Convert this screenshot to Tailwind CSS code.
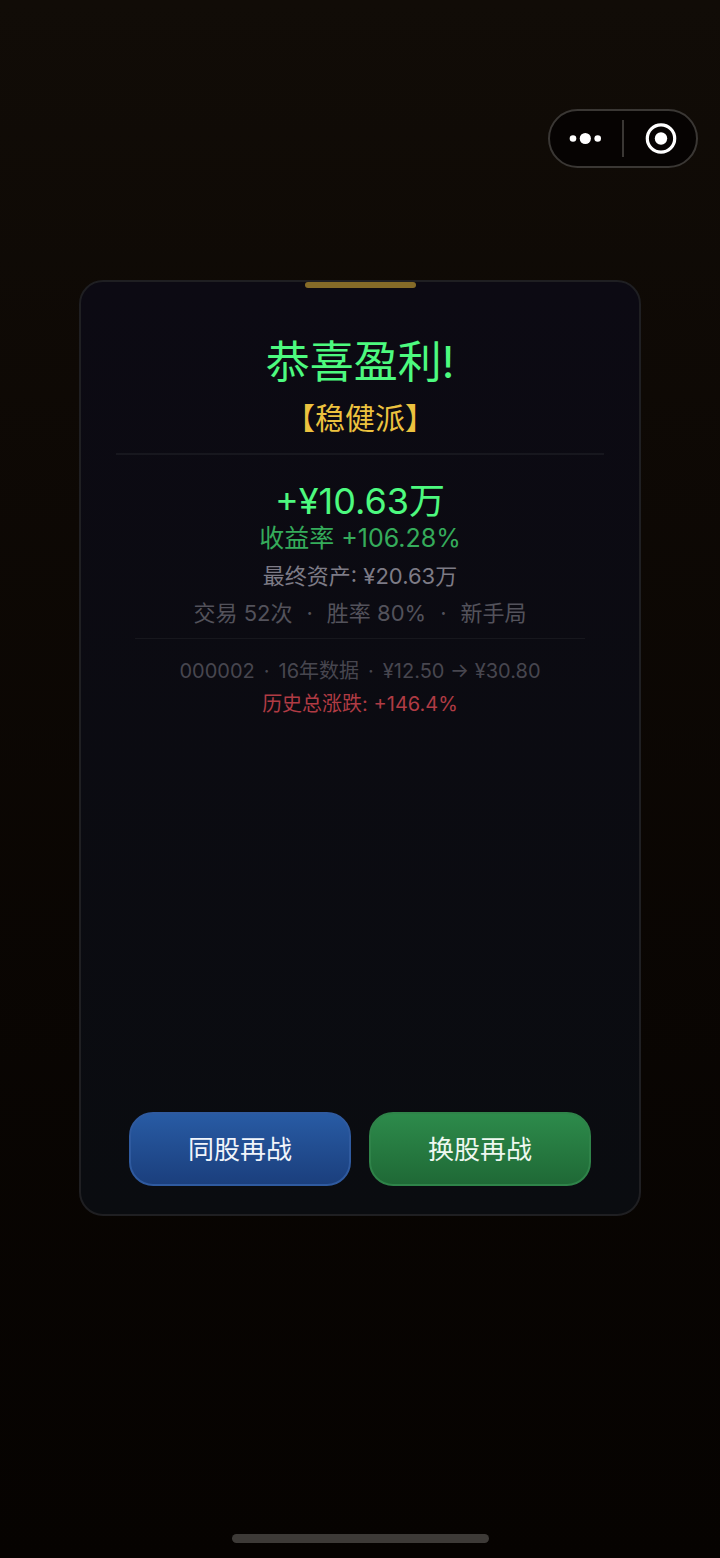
<!DOCTYPE html>
<html lang="zh-CN">
<head>
<meta charset="utf-8">
<meta name="viewport" content="width=device-width, initial-scale=1">
<title>恭喜盈利</title>
<script src="https://cdn.jsdelivr.net/npm/@tailwindcss/browser@4"></script>
</head>
<body class="flex min-h-screen flex-col bg-linear-to-b from-[#110c07] to-[#060301] font-['Inter','Noto_Sans_CJK_SC',sans-serif] font-normal">
  <header class="flex justify-end px-[22px] pt-[109px]">
    <div class="flex h-[59px] w-[150px] items-center rounded-full border-2 border-[#3a3734] bg-[#060302]">
      <button type="button" aria-label="更多" class="flex h-full flex-1 items-center justify-center">
        <svg width="34" height="14" viewBox="0 0 34 14" fill="#fff"><circle cx="4" cy="6.5" r="3.3"/><circle cx="16.3" cy="6.5" r="5.6"/><circle cx="28.7" cy="6.5" r="3.3"/></svg>
      </button>
      <span class="h-[37px] w-[2px] bg-[#3a3734]"></span>
      <button type="button" aria-label="关闭" class="flex h-full flex-1 items-center justify-center">
        <svg width="34" height="34" viewBox="0 0 34 34"><circle cx="18" cy="16.5" r="13.7" fill="none" stroke="#fff" stroke-width="3.2"/><circle cx="18" cy="16.5" r="6.2" fill="#fff"/></svg>
      </button>
    </div>
  </header>

  <main class="mt-[112px] flex px-[79px]">
    <section class="flex min-h-[936px] flex-1 flex-col rounded-[24px] border-2 border-[#1f1f22] bg-linear-to-b from-[#0c0a13] to-[#0a0c10] text-center">
      <div class="mx-auto h-[6px] w-[111px] rounded-full bg-[#856b28]"></div>
      <h1 class="mt-[46px] text-[44px] leading-[56px] text-[#4dfa7f]">恭喜盈利!</h1>
      <p class="mt-3 text-[30px] leading-[32px] text-[#ecc23f]">【稳健派】</p>
      <hr class="mx-[35px] mt-[19px] border-t-2 border-[#17171e]">
      <p class="mt-[26px] text-[36px] leading-[40px] text-[#4dfa7f]">+¥10.63万</p>
      <p class="text-[25px] leading-[34px] text-[#35ac5b]">收益率 +106.28%</p>
      <p class="text-[22px] leading-[42px] text-[#7d7b86]">最终资产: ¥20.63万</p>
      <p class="flex justify-center gap-3.5 text-[22px] leading-[32px] text-[#53525b]"><span>交易 52次</span><span>·</span><span>胜率 80%</span><span>·</span><span>新手局</span></p>
      <hr class="mx-[54px] mt-[9px] border-t border-[#17171d]">
      <p class="mt-4 flex justify-center gap-[9px] text-[20px] leading-[32px] text-[#47464f]"><span>000002</span><span>·</span><span>16年数据</span><span>·</span><span>¥12.50 → ¥30.80</span></p>
      <p class="text-[20px] leading-[34px] text-[#b03b44]">历史总涨跌: +146.4%</p>
      <div class="mt-auto flex gap-[18px] px-12 pt-6 pb-7">
        <button type="button" class="h-[74px] flex-1 rounded-[24px] border-2 border-[#2f5a9f] bg-linear-to-b from-[#285ba4] to-[#1b3f7d] text-[26px] text-[#f1f5fb]">同股再战</button>
        <button type="button" class="h-[74px] flex-1 rounded-[24px] border-2 border-[#2f8349] bg-linear-to-b from-[#2d8b4b] to-[#1f6936] text-[26px] text-[#eef8f0]">换股再战</button>
      </div>
    </section>
  </main>

  <footer class="mt-auto flex justify-center pb-[15px]">
    <div class="h-[9px] w-[257px] rounded-full bg-[#3d3a37]"></div>
  </footer>
</body>
</html>
